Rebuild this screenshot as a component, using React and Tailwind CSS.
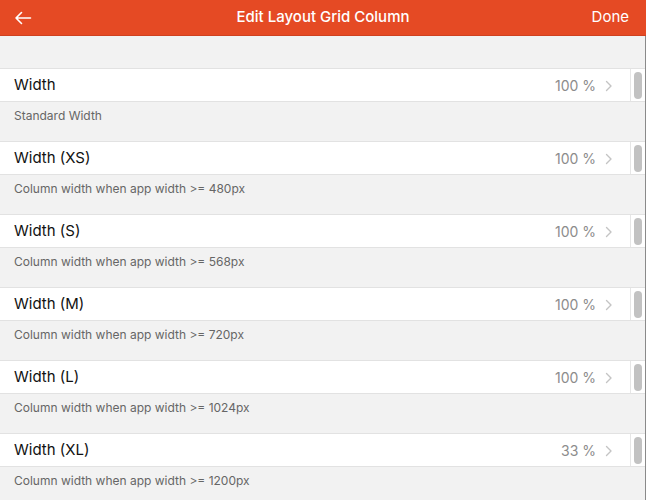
import React from "react";

const rows = [
  { label: "Width", value: "100 %", desc: "Standard Width" },
  { label: "Width (XS)", value: "100 %", desc: "Column width when app width >= 480px" },
  { label: "Width (S)", value: "100 %", desc: "Column width when app width >= 568px" },
  { label: "Width (M)", value: "100 %", desc: "Column width when app width >= 720px" },
  { label: "Width (L)", value: "100 %", desc: "Column width when app width >= 1024px" },
  { label: "Width (XL)", value: "33 %", desc: "Column width when app width >= 1200px" },
];

function Chevron() {
  return (
    <svg width="8" height="12" viewBox="0 0 8 12" fill="none" className="ml-[9px]">
      <path d="M1.5 1.5L6 6l-4.5 4.5" stroke="#c4c4c4" strokeWidth="1.4" strokeLinecap="round" strokeLinejoin="round" />
    </svg>
  );
}

function App() {
  return (
    <div
      className="w-[646px] h-[500px] overflow-hidden bg-[#f2f2f2] flex flex-col"
      style={{ fontFamily: "Inter, 'Noto Sans', sans-serif" }}
    >
      <div className="h-[36px] shrink-0 bg-[#e54a24] border-b border-[#cf4120] flex items-center px-[14px] relative">
        <svg width="18" height="14" viewBox="0 0 18 14" fill="none">
          <path d="M16.5 7H2M7.5 1.5L2 7l5.5 5.5" stroke="white" strokeWidth="1.6" strokeLinecap="round" strokeLinejoin="round" />
        </svg>
        <div className="absolute inset-x-0 text-center text-white text-[15px] font-medium pointer-events-none">
          Edit Layout Grid Column
        </div>
        <div className="ml-auto mr-[3px] text-white text-[15px]">Done</div>
      </div>
      <div className="flex-1 border-r border-[#8a8a8a] pt-[32px]">
        {rows.map((r) => (
          <div key={r.label}>
            <div className="h-[34px] bg-white border-y border-[#e2e2e2] flex">
              <div className="flex-1 flex items-center pl-[14px] pr-[17px] pt-px">
                <span className="text-[15px] text-[#111]">{r.label}</span>
                <span className="ml-auto text-[14px] text-[#8c8c8c]">{r.value}</span>
                <Chevron />
              </div>
              <div className="w-[15px] border-l border-[#e6e6e6] flex justify-center items-center">
                <div className="w-[8px] h-[27px] rounded-full bg-[#c2c2c2]" />
              </div>
            </div>
            <div className="h-[39px] pl-[14px] pt-[5px] text-[12px] text-[#666]">{r.desc}</div>
          </div>
        ))}
      </div>
    </div>
  );
}

export default App;
